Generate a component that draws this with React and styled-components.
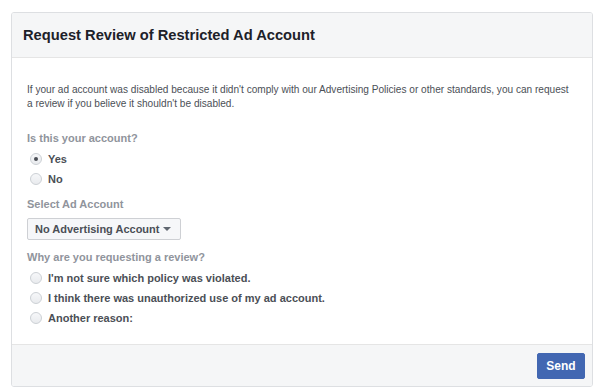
import React, { useState } from "react";
import styled, { createGlobalStyle } from "styled-components";

const GlobalStyle = createGlobalStyle`
  body {
    margin: 0;
    background: #fff;
    font-family: "Liberation Sans", Arial, Helvetica, sans-serif;
  }
`;

const App = () => {
  const [owner, setOwner] = useState("yes");
  const [reason, setReason] = useState("");

  return (
    <Page>
      <GlobalStyle />
      <Card>
        <Header>
          <Title>Request Review of Restricted Ad Account</Title>
        </Header>
        <Body>
          <Intro>
            If your ad account was disabled because it didn't comply with our Advertising Policies or other standards, you can request
            <br />
            a review if you believe it shouldn't be disabled.
          </Intro>

          <Question>Is this your account?</Question>
          <Options>
            <Option onClick={() => setOwner("yes")}>
              <Radio $checked={owner === "yes"} />
              Yes
            </Option>
            <Option onClick={() => setOwner("no")}>
              <Radio $checked={owner === "no"} />
              No
            </Option>
          </Options>

          <Question>Select Ad Account</Question>
          <Dropdown type="button">
            No Advertising Account
            <Caret />
          </Dropdown>

          <Question>Why are you requesting a review?</Question>
          <Options>
            <Option onClick={() => setReason("policy")}>
              <Radio $checked={reason === "policy"} />
              I'm not sure which policy was violated.
            </Option>
            <Option onClick={() => setReason("unauthorized")}>
              <Radio $checked={reason === "unauthorized"} />
              I think there was unauthorized use of my ad account.
            </Option>
            <Option onClick={() => setReason("other")}>
              <Radio $checked={reason === "other"} />
              Another reason:
            </Option>
          </Options>
        </Body>
        <Footer>
          <SendButton type="button">Send</SendButton>
        </Footer>
      </Card>
    </Page>
  );
};

const Page = styled.div`
  padding: 12px 7px 0 11px;
`;

const Card = styled.div`
  width: 582px;
  height: 375px;
  box-sizing: border-box;
  border: 1px solid #dddfe2;
  border-radius: 3px;
  display: flex;
  flex-direction: column;
  overflow: hidden;
`;

const Header = styled.div`
  height: 45px;
  box-sizing: border-box;
  background: #f5f6f7;
  border-bottom: 1px solid #e5e5e5;
  display: flex;
  align-items: center;
  padding: 0 11px;
`;

const Title = styled.h2`
  margin: 0;
  font-size: 14.7px;
  font-weight: bold;
  color: #1d2129;
`;

const Body = styled.div`
  flex: 1;
  padding: 25px 15px 0 15px;
`;

const Intro = styled.p`
  margin: 0 0 19px;
  font-size: 10.1px;
  line-height: 14px;
  color: #4b4f56;
`;

const Question = styled.div`
  font-size: 11px;
  font-weight: bold;
  color: #90949c;
  line-height: 16px;
  margin-bottom: 3px;
`;

const Options = styled.div`
  display: flex;
  flex-direction: column;
  margin-bottom: 7px;
`;

const Option = styled.label`
  display: flex;
  align-items: center;
  gap: 6px;
  height: 20px;
  padding-left: 3px;
  font-size: 11px;
  font-weight: bold;
  color: #4b4f56;
  cursor: pointer;
`;

const Radio = styled.span`
  width: 12px;
  height: 12px;
  box-sizing: border-box;
  border-radius: 50%;
  border: 1px solid #ccd0d5;
  background: linear-gradient(#f6f7f9, #e9ebee);
  display: flex;
  align-items: center;
  justify-content: center;

  &::after {
    content: "";
    width: 4px;
    height: 4px;
    border-radius: 50%;
    background: #4b4f56;
    display: ${(p) => (p.$checked ? "block" : "none")};
  }
`;

const Dropdown = styled.button`
  display: flex;
  align-items: center;
  gap: 4px;
  height: 22px;
  padding: 0 9px 0 7px;
  margin: 6px 0 9px;
  border: 1px solid #ced0d4;
  border-radius: 2px;
  background: #f6f7f9;
  font-family: inherit;
  font-size: 11px;
  font-weight: bold;
  color: #4b4f56;
  cursor: pointer;
`;

const Caret = styled.span`
  width: 0;
  height: 0;
  border-left: 4px solid transparent;
  border-right: 4px solid transparent;
  border-top: 4px solid #606770;
`;

const Footer = styled.div`
  height: 42px;
  box-sizing: border-box;
  background: #f5f6f7;
  border-top: 1px solid #e5e5e5;
  display: flex;
  align-items: center;
  justify-content: flex-end;
  padding: 0 7px;
`;

const SendButton = styled.button`
  width: 48px;
  height: 26px;
  border: 1px solid #4267b2;
  border-radius: 2px;
  background: #4267b2;
  color: #fff;
  font-family: inherit;
  font-size: 12px;
  font-weight: bold;
  cursor: pointer;
`;

export default App;
